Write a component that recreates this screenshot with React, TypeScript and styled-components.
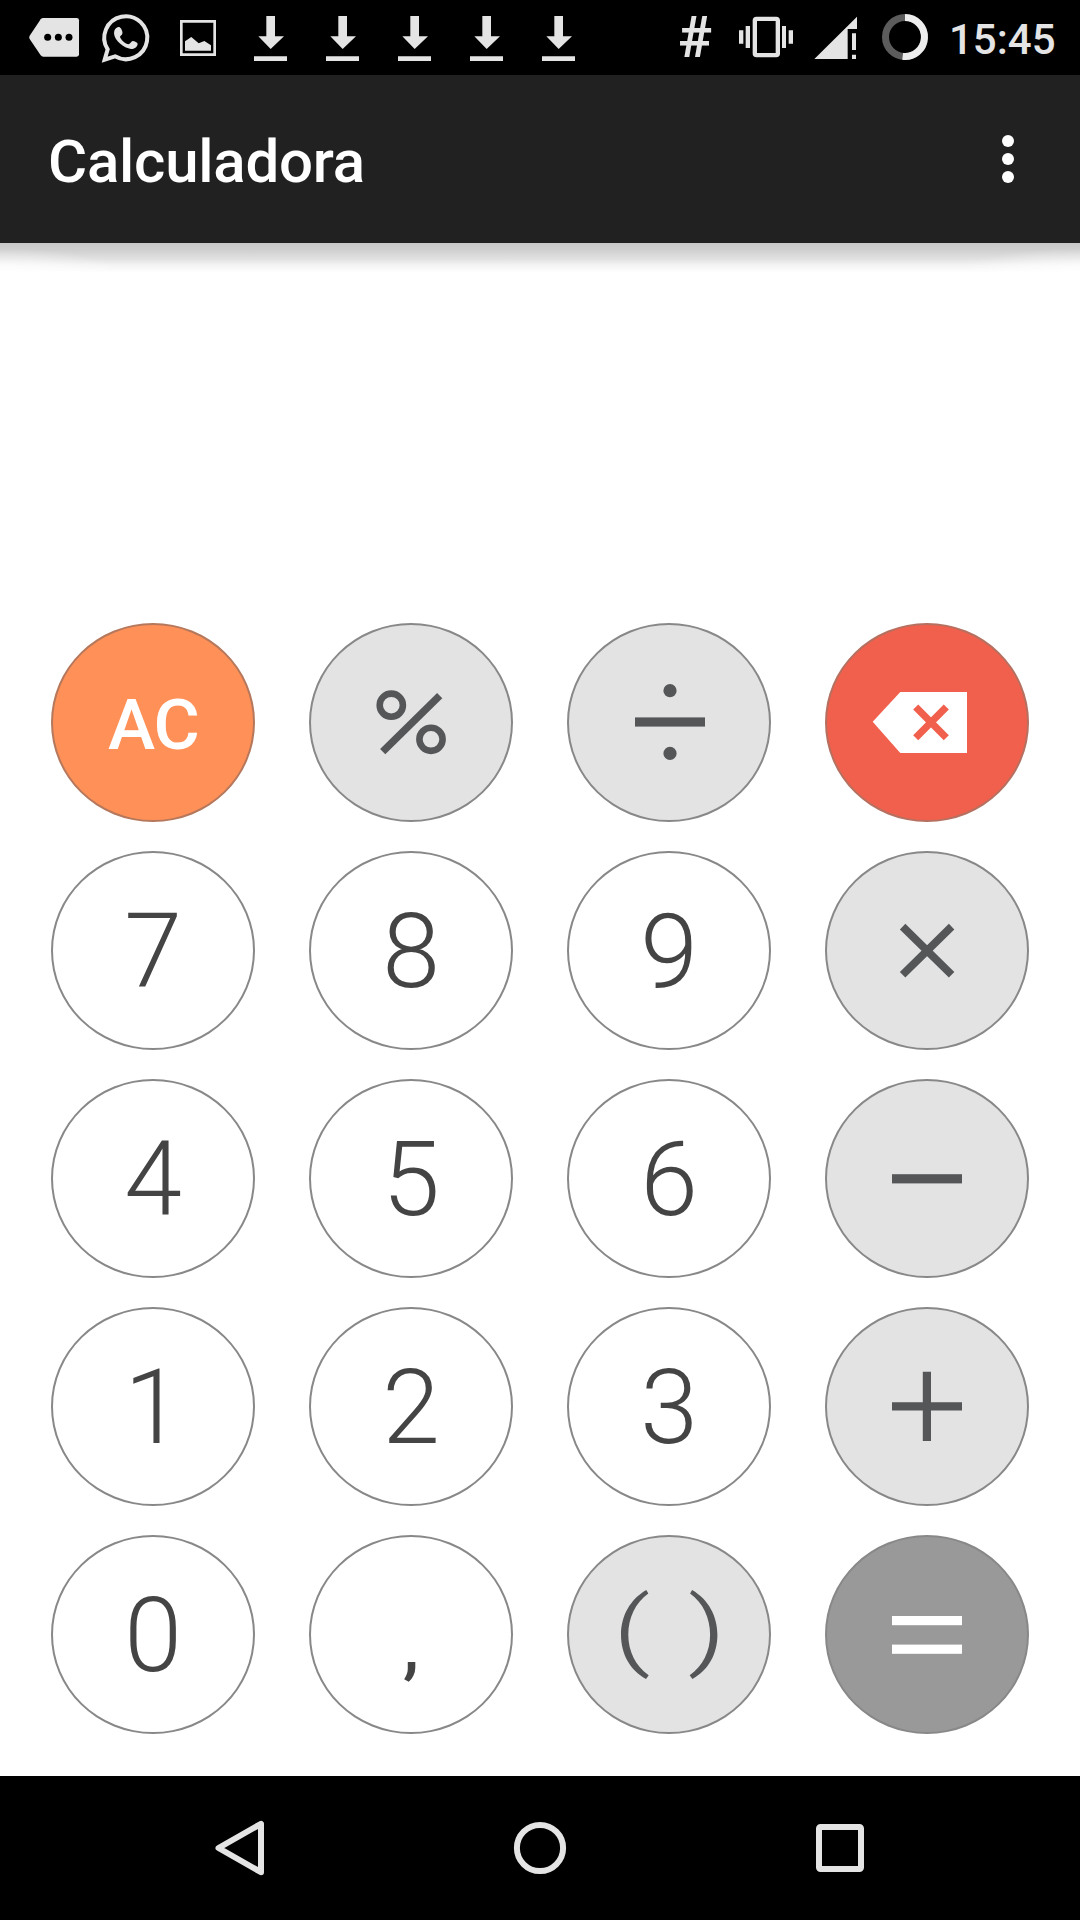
import React from 'react';
import styled, { createGlobalStyle } from 'styled-components';

const GlobalStyle = createGlobalStyle`
  body { margin: 0; background: #fff; }
  * { box-sizing: border-box; }
`;

const INK = '#e4e4e4';
const GLYPH = '#545658';

const Screen = styled.div`
  width: 1080px;
  height: 1920px;
  display: flex;
  flex-direction: column;
  background: #fff;
  font-family: Roboto, 'Liberation Sans', sans-serif;
  overflow: hidden;
`;

const StatusBar = styled.div`
  height: 75px;
  flex: none;
  display: flex;
  align-items: center;
  justify-content: space-between;
  padding: 0 34px 0 18px;
  background: #000;
  color: ${INK};
`;

const StatusGroup = styled.div`
  display: flex;
  align-items: center;
  height: 75px;
`;

const StatusIcon = styled.svg`
  display: block;
  height: 75px;
  fill: ${INK};
`;

const Hash = styled.span`
  width: 70px;
  text-align: center;
  font-size: 57px;
  font-weight: 600;
  line-height: 75px;
`;

const Clock = styled.span`
  width: 106px;
  padding: 5px 0 0 9px;
  font-size: 42px;
  font-weight: 500;
  line-height: 70px;
  white-space: nowrap;
`;

const AppBar = styled.header`
  height: 168px;
  flex: none;
  display: flex;
  align-items: center;
  justify-content: space-between;
  padding: 0 60px 0 48px;
  background: #212121;
`;

const Title = styled.h1`
  margin: 0;
  padding-top: 5px;
  color: #fff;
  font-size: 60px;
  font-weight: 500;
  letter-spacing: -0.25px;
  line-height: 72px;
`;

const Overflow = styled.button`
  display: flex;
  flex-direction: column;
  gap: 6px;
  padding: 0 6px;
  border: 0;
  background: none;
`;

const Dot = styled.span`
  width: 12px;
  height: 12px;
  border-radius: 50%;
  background: #fff;
`;

const Display = styled.div`
  height: 380px;
  flex: none;
`;

const Shadow = styled.div`
  height: 30px;
  background:
    radial-gradient(ellipse 120px 25px at 0 100%, rgba(255, 255, 255, 0.9), rgba(255, 255, 255, 0)),
    radial-gradient(ellipse 120px 25px at 100% 100%, rgba(255, 255, 255, 0.9), rgba(255, 255, 255, 0)),
    linear-gradient(#c8c8c8, #d0d0d0 24%, #e2e2e2 54%, #f4f4f4 74%, #fff);
`;

const Keypad = styled.main`
  flex: 1;
  display: grid;
  grid-template-columns: repeat(4, 204px);
  grid-auto-rows: 199px;
  gap: 29px 54px;
  padding: 0 51px;
`;

type Tone = 'digit' | 'comma' | 'operator' | 'clear' | 'remove' | 'equals';

const fills: Record<Tone, string> = {
  digit: '#fff',
  comma: '#fff',
  operator: '#e3e3e3',
  clear: '#ff9057',
  remove: '#f1604d',
  equals: '#999',
};

const rims: Record<Tone, string> = {
  digit: '#888',
  comma: '#888',
  operator: '#888',
  clear: '#b5785c',
  remove: '#b57060',
  equals: '#888',
};

const Key = styled.button<{ $tone: Tone }>`
  display: flex;
  align-items: center;
  justify-content: center;
  padding: ${(p) => (p.$tone === 'digit' ? '2px 0 0' : '0')};
  border: 2px solid ${(p) => rims[p.$tone]};
  border-radius: 50%;
  background: ${(p) => fills[p.$tone]};
  color: #444;
  font-family: inherit;
  font-size: 104px;
  font-weight: 300;
  line-height: 1;

  ${(p) =>
    p.$tone === 'clear' &&
    `
    padding: 3px 0 0 1px;
    color: #fff;
    font-size: 71px;
    font-weight: 500;
    letter-spacing: -1px;
  `}

  ${(p) =>
    p.$tone === 'comma' &&
    `
    padding-top: 23px;
    font-size: 72px;
    font-weight: 500;
  `}
`;

const KeyArt = styled.svg`
  display: block;
  width: 200px;
  height: 195px;
  flex: none;
`;

const NavBar = styled.nav`
  height: 144px;
  flex: none;
  display: grid;
  grid-template-columns: repeat(3, 300px);
  justify-content: center;
  background: #000;
`;

const NavIcon = styled.svg`
  display: block;
  width: 300px;
  height: 144px;
  fill: none;
  stroke: ${INK};
`;

const Art = ({ children }: { children: React.ReactNode }) => (
  <KeyArt viewBox="-100 -98 200 195">{children}</KeyArt>
);

const PAREN =
  'M-22.7-45C-39-35.5-48-19-48-.3C-48 19-39 35-23 44L-20.3 40.3C-33.5 31-40.7 16-40.7-.3C-40.7-17-33.5-32.5-20.7-41.5Z';

const Percent = () => (
  <Art>
    <g fill="none" stroke={GLYPH}>
      <circle cx="-19.7" cy="-17.8" r="11.6" strokeWidth="6.6" />
      <circle cx="20" cy="16.3" r="11.6" strokeWidth="6.6" />
      <path d="M-28.3 28.6L28.7-27.4" strokeWidth="7.4" />
    </g>
  </Art>
);

const Divide = () => (
  <Art>
    <g fill={GLYPH}>
      <circle cx="1" cy="-32.3" r="6.6" />
      <circle cx="1" cy="30.4" r="6.6" />
      <rect x="-34" y="-5.6" width="70" height="9.2" />
    </g>
  </Art>
);

const Backspace = () => (
  <Art>
    <path d="M-54.3-1.2L-26.7-31H40V30H-26.7Z" fill="#fff" />
    <path d="M-11.3-16L19.3 14.7M19.3-16L-11.3 14.7" stroke={fills.remove} strokeWidth="7.2" />
  </Art>
);

const Times = () => (
  <Art>
    <path d="M-24.4-24.4L24.6 23.8M24.6-24.4L-24.4 23.8" stroke={GLYPH} strokeWidth="7.8" />
  </Art>
);

const Minus = () => (
  <Art>
    <rect x="-35" y="-4.8" width="70" height="9.2" fill={GLYPH} />
  </Art>
);

const Plus = () => (
  <Art>
    <path d="M-35-.6H35M-.1-35.2V34" stroke={GLYPH} strokeWidth="8.2" />
  </Art>
);

const Parens = () => (
  <Art>
    <g fill={GLYPH}>
      <path d={PAREN} />
      <path d={PAREN} transform="translate(.4 0) scale(-1 1)" />
    </g>
  </Art>
);

const Equals = () => (
  <Art>
    <g fill="#fff">
      <rect x="-35" y="-19" width="70" height="9.2" />
      <rect x="-35" y="9.6" width="70" height="9.2" />
    </g>
  </Art>
);

const keys: { label: string; tone: Tone; art?: React.ReactNode }[] = [
  { label: 'AC', tone: 'clear' },
  { label: '%', tone: 'operator', art: <Percent /> },
  { label: '÷', tone: 'operator', art: <Divide /> },
  { label: '⌫', tone: 'remove', art: <Backspace /> },
  { label: '7', tone: 'digit' },
  { label: '8', tone: 'digit' },
  { label: '9', tone: 'digit' },
  { label: '×', tone: 'operator', art: <Times /> },
  { label: '4', tone: 'digit' },
  { label: '5', tone: 'digit' },
  { label: '6', tone: 'digit' },
  { label: '−', tone: 'operator', art: <Minus /> },
  { label: '1', tone: 'digit' },
  { label: '2', tone: 'digit' },
  { label: '3', tone: 'digit' },
  { label: '+', tone: 'operator', art: <Plus /> },
  { label: '0', tone: 'digit' },
  { label: ',', tone: 'comma' },
  { label: '( )', tone: 'operator', art: <Parens /> },
  { label: '=', tone: 'equals', art: <Equals /> },
];

const Download = () => (
  <StatusIcon width="72" viewBox="702 0 216 225">
    <path d="M799 48H825V109H852L812 147L775 109H799ZM762 169H861V183H762Z" />
  </StatusIcon>
);

export default function App() {
  return (
    <Screen>
      <GlobalStyle />
      <StatusBar>
        <StatusGroup>
          <StatusIcon width="72" viewBox="54 0 216 225">
            <path d="M130 54H230Q237 54 237 61V163Q237 170 230 170H130Q125 170 122 166L89 117Q86 112 89 107L122 58Q125 54 130 54Z" />
            <g fill="#000">
              <circle cx="143" cy="112" r="10.5" />
              <circle cx="175" cy="112" r="10.5" />
              <circle cx="207" cy="112" r="10.5" />
            </g>
          </StatusIcon>
          <StatusIcon width="72" viewBox="270 0 216 225">
            <path
              d="M314 179L323 148A64.5 64.5 0 1 1 345 169Z"
              fill="none"
              stroke={INK}
              strokeWidth="12"
            />
            <path d="M343 92C347 83 355 79 359 82C365 86 369 97 367 101C366 105 360 108 360 111C364 121 376 132 386 133C391 130 394 124 398 123C404 123 412 128 413 131C412 141 403 147 393 147C372 145 343 122 342 100Z" />
          </StatusIcon>
          <StatusIcon width="72" viewBox="486 0 216 225">
            <path d="M540 60H648V168H540ZM548 68V160H640V68Z" fillRule="evenodd" />
            <path d="M555 124L574 111L596 130L613 123L633 136V152H555Z" />
          </StatusIcon>
          <Download />
          <Download />
          <Download />
          <Download />
          <Download />
        </StatusGroup>
        <StatusGroup>
          <Hash>#</Hash>
          <StatusIcon width="70" viewBox="90 0 210 225">
            <rect x="164.5" y="56.5" width="69" height="109" rx="5" fill="none" stroke={INK} strokeWidth="13" />
            <path d="M137 78H150V144H137ZM246 78H258V144H246ZM117 91H130V131H117ZM266 91H279V131H266Z" />
          </StatusIcon>
          <StatusIcon width="70" viewBox="300 0 210 225">
            <path d="M343 177L471 50V87H443V177ZM456 100H468V150H456ZM456 164H468V177H456Z" />
          </StatusIcon>
          <StatusIcon width="70" viewBox="510 0 210 225">
            <g fill="none" strokeWidth="21">
              <circle cx="615" cy="111" r="58.5" stroke="#5c5c5c" />
              <path d="M615 52.5A58.5 58.5 0 1 1 608 169.1" stroke="#ededed" />
            </g>
          </StatusIcon>
          <Clock>15:45</Clock>
        </StatusGroup>
      </StatusBar>
      <AppBar>
        <Title>Calculadora</Title>
        <Overflow aria-label="Menu">
          <Dot />
          <Dot />
          <Dot />
        </Overflow>
      </AppBar>
      <Display>
        <Shadow />
      </Display>
      <Keypad>
        {keys.map((k) => (
          <Key key={k.label} $tone={k.tone} aria-label={k.label}>
            {k.art ?? k.label}
          </Key>
        ))}
      </Keypad>
      <NavBar>
        <NavIcon viewBox="0 0 300 144">
          <path d="M171 47.8V96.2L128.5 72Z" strokeWidth="6" strokeLinejoin="round" />
        </NavIcon>
        <NavIcon viewBox="0 0 300 144">
          <circle cx="150" cy="72" r="23.1" strokeWidth="6" />
        </NavIcon>
        <NavIcon viewBox="0 0 300 144">
          <rect x="129" y="51" width="42" height="42" rx="1.5" strokeWidth="6" />
        </NavIcon>
      </NavBar>
    </Screen>
  );
}
